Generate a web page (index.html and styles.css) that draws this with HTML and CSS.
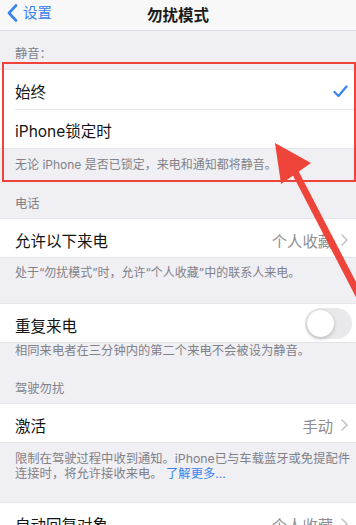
FILE: index.html
```html
<!DOCTYPE html>
<html lang="zh-CN">
<head>
<meta charset="utf-8">
<title>勿扰模式</title>
<link rel="stylesheet" href="styles.css">
</head>
<body>
<div class="screen">
  <header class="nav">
    <div class="back">
      <svg class="back-chev" width="11" height="18" viewBox="0 0 11 18"><path d="M9 1.5 L2 9 L9 16.5" fill="none" stroke="#3a82f0" stroke-width="2.6" stroke-linecap="round" stroke-linejoin="round"/></svg>
      <span>设置</span>
    </div>
    <div class="title">勿扰模式</div>
  </header>

  <div class="sec-header h1">静音：</div>
  <div class="group">
    <div class="row tall">
      <span class="label">始终</span>
      <svg class="check" width="15" height="13" viewBox="0 0 15 13"><path d="M1.5 7 L5.5 11 L13.5 1.5" fill="none" stroke="#3a82f0" stroke-width="2.2" stroke-linecap="round" stroke-linejoin="round"/></svg>
    </div>
    <div class="row tall sep">
      <span class="label">iPhone锁定时</span>
    </div>
  </div>
  <div class="footer f1">无论 iPhone 是否已锁定，来电和通知都将静音。</div>

  <div class="sec-header h2">电话</div>
  <div class="group">
    <div class="row">
      <span class="label">允许以下来电</span>
      <span class="value">个人收藏<svg class="chev" width="7" height="12" viewBox="0 0 7 12"><path d="M1 1 L6 6 L1 11" fill="none" stroke="#c4c4c8" stroke-width="1.6" stroke-linecap="round" stroke-linejoin="round"/></svg></span>
    </div>
  </div>
  <div class="footer f2">处于“勿扰模式”时，允许“个人收藏”中的联系人来电。</div>

  <div class="group g3">
    <div class="row">
      <span class="label">重复来电</span>
      <span class="toggle"><span class="knob"></span></span>
    </div>
  </div>
  <div class="footer f3">相同来电者在三分钟内的第二个来电不会被设为静音。</div>

  <div class="sec-header h4">驾驶勿扰</div>
  <div class="group">
    <div class="row">
      <span class="label">激活</span>
      <span class="value">手动<svg class="chev" width="7" height="12" viewBox="0 0 7 12"><path d="M1 1 L6 6 L1 11" fill="none" stroke="#c4c4c8" stroke-width="1.6" stroke-linecap="round" stroke-linejoin="round"/></svg></span>
    </div>
  </div>
  <div class="footer f4">限制在驾驶过程中收到通知。iPhone已与车载蓝牙或免提配件<br>连接时，将允许接收来电。 <span class="link">了解更多...</span></div>

  <div class="group g5">
    <div class="row">
      <span class="label">自动回复对象</span>
      <span class="value">个人收藏<svg class="chev" width="7" height="12" viewBox="0 0 7 12"><path d="M1 1 L6 6 L1 11" fill="none" stroke="#c4c4c8" stroke-width="1.6" stroke-linecap="round" stroke-linejoin="round"/></svg></span>
    </div>
  </div>

  <svg class="annot" width="356" height="525" viewBox="0 0 356 525">
    <rect x="3" y="63" width="352" height="118" fill="none" stroke="#ef4439" stroke-width="2"/>
    <line x1="294" y1="170" x2="364" y2="305" stroke="#ef4439" stroke-width="7"/>
    <polygon points="275,143 311,163 281,184" fill="#ef4439"/>
  </svg>
</div>
</body>
</html>
```

FILE: styles.css
```css
html, body {
  margin: 0;
  padding: 0;
}
body {
  background: #efeff4;
  font-family: "Inter", "Noto Sans CJK SC", sans-serif;
  color: #111;
  overflow: hidden;
}
.screen {
  position: relative;
  width: 356px;
  height: 525px;
  overflow: hidden;
  display: flex;
  flex-direction: column;
}
.nav {
  flex: none;
  height: 30px;
  border-bottom: 1px solid #dcdce0;
  background: #f8f8f9;
  position: relative;
  display: flex;
  align-items: center;
  justify-content: center;
}
.back {
  position: absolute;
  left: 7px;
  top: 4px;
  display: flex;
  align-items: center;
  gap: 5px;
  color: #3a82f0;
  font-size: 14.5px;
  line-height: 18px;
}
.title {
  font-size: 15.5px;
  font-weight: 600;
  margin-top: -3px;
  color: #1a1a1a;
}
.sec-header {
  flex: none;
  padding: 0 15px 6px;
  font-size: 12.3px;
  line-height: 16px;
  color: #818187;
}
.h1 { padding-top: 15px; padding-bottom: 7px; }
.h2 { padding-top: 23px; }
.h4 { padding-top: 22px; }
.group {
  flex: none;
  background: #fff;
  border-top: 1px solid #e4e4e9;
  border-bottom: 1px solid #e4e4e9;
}
.row {
  height: 38px;
  box-sizing: border-box;
  padding: 3px 8px 0 15px;
  display: flex;
  align-items: center;
  justify-content: space-between;
  position: relative;
}
.row.tall {
  height: 39px;
}
.row.sep::before {
  content: "";
  position: absolute;
  left: 15px;
  right: 0;
  top: 0;
  border-top: 1px solid #e4e4e9;
}
.label {
  font-size: 15.5px;
  color: #141414;
}
.value {
  display: flex;
  align-items: center;
  gap: 8px;
  font-size: 15.3px;
  color: #8e8e93;
}
.footer {
  flex: none;
  padding: 8px 4px 0 15px;
  font-size: 12px;
  line-height: 16px;
  color: #818187;
  white-space: nowrap;
}
.f1 { padding-top: 8px; }
.f2 { padding-top: 7px; }
.f3 { padding-top: 0; font-size: 12.3px; }
.f4 { padding-top: 8px; line-height: 15px; font-size: 12.3px; }
.g3 { margin-top: 22px; }
.g5 { margin-top: 21px; }
.link { color: #3a82f0; }
.toggle {
  width: 47px;
  height: 31px;
  border-radius: 16px;
  background: #e9e9eb;
  margin-right: -4px;
  margin-top: -3px;
  position: relative;
}
.knob {
  position: absolute;
  left: 2px;
  top: 2px;
  width: 27px;
  height: 27px;
  border-radius: 50%;
  background: #fff;
  box-shadow: 0 2px 4px rgba(0,0,0,0.18), 0 0 1px rgba(0,0,0,0.15);
}
.annot {
  position: absolute;
  left: 0;
  top: 0;
  pointer-events: none;
}
```
